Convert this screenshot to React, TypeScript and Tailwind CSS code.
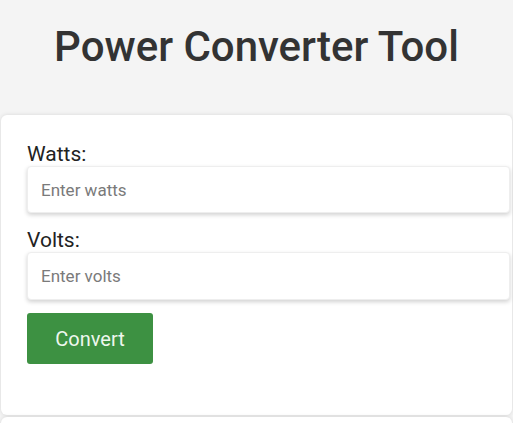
export default function App() {
  return (
    <div className="min-h-[423px] bg-[#f4f4f4] font-['Roboto',sans-serif] overflow-hidden">
      <h1 className="pt-[21px] text-center text-[42px] leading-[52px] font-medium text-[#333]">
        Power Converter Tool
      </h1>

      <div className="mt-[42px] mx-[1px] rounded-[6px] bg-white pl-[26px] pt-[27px] pb-[51px] shadow-[0_0_4px_rgba(0,0,0,0.12)]">
        <label className="block text-[21px] leading-[24px] text-[#222]">Watts:</label>
        <input
          type="text"
          placeholder="Enter watts"
          className="block w-[483px] h-[47px] mb-[15px] rounded-[4px] border border-[#eee] bg-white px-[13px] text-[17px] text-[#333] placeholder:text-[#7a7a7a] shadow-[0_2px_4px_rgba(0,0,0,0.18)] outline-none"
        />

        <label className="block text-[21px] leading-[24px] text-[#222]">Volts:</label>
        <input
          type="text"
          placeholder="Enter volts"
          className="block w-[483px] h-[48px] mb-[13px] rounded-[4px] border border-[#eee] bg-white px-[13px] text-[17px] text-[#333] placeholder:text-[#7a7a7a] shadow-[0_2px_4px_rgba(0,0,0,0.18)] outline-none"
        />

        <button className="w-[126px] h-[51px] rounded-[3px] bg-[#3d9142] text-[20px] text-[#eef7ee]">
          Convert
        </button>
      </div>

      <div className="mt-[2px] mx-[1px] h-[20px] rounded-t-[6px] bg-white shadow-[0_0_4px_rgba(0,0,0,0.12)]" />
    </div>
  );
}
